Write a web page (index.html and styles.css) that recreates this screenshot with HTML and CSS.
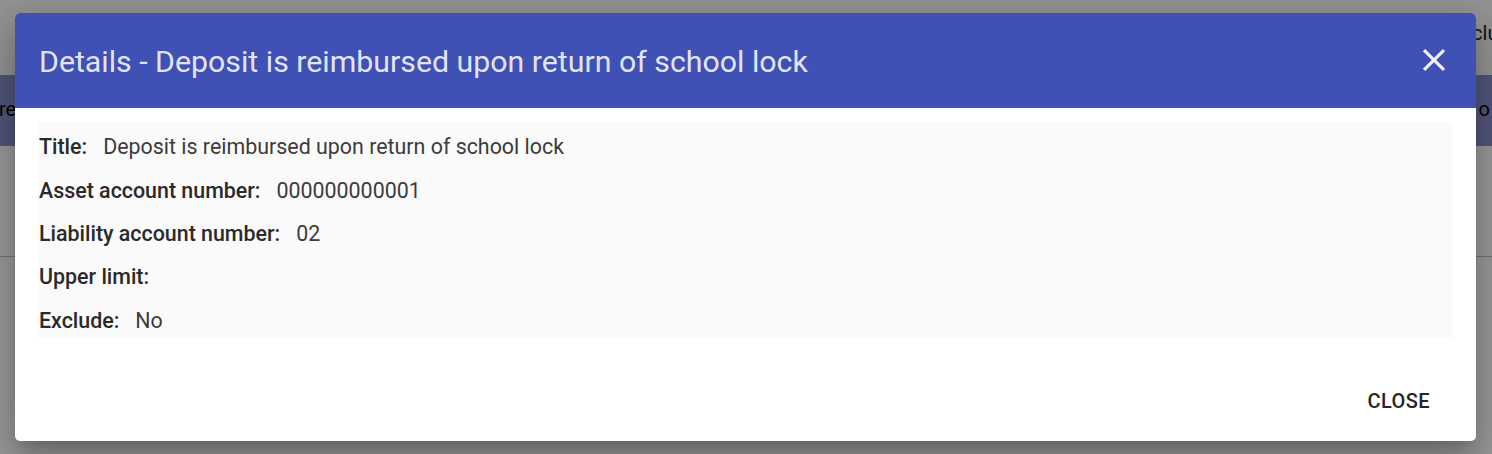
FILE: index.html
```html
<!DOCTYPE html>
<html lang="en">
<head>
<meta charset="utf-8">
<title>Details</title>
<link rel="stylesheet" href="styles.css">
</head>
<body>
<div class="page">
  <div class="topbar"><span class="top-text">Exclude</span></div>
  <div class="band"><span class="band-left">reimbursed</span><span class="band-right">o</span></div>
  <div class="rowline"></div>
</div>
<div class="backdrop"></div>
<div class="dialog">
  <div class="dialog-header">
    <h2 class="dialog-title">Details - Deposit is reimbursed upon return of school lock</h2>
    <button class="icon-btn" aria-label="Close">
      <svg viewBox="0 0 24 24" width="38" height="38"><path fill="currentColor" d="M19 6.41L17.59 5 12 10.59 6.41 5 5 6.41 10.59 12 5 17.59 6.41 19 12 13.41 17.59 19 19 17.59 13.41 12z"/></svg>
    </button>
  </div>
  <div class="dialog-content">
    <div class="panel">
      <div class="row"><span class="label">Title:</span><span class="value">Deposit is reimbursed upon return of school lock</span></div>
      <div class="row"><span class="label">Asset account number:</span><span class="value">000000000001</span></div>
      <div class="row"><span class="label">Liability account number:</span><span class="value">02</span></div>
      <div class="row"><span class="label">Upper limit:</span><span class="value"></span></div>
      <div class="row"><span class="label">Exclude:</span><span class="value">No</span></div>
    </div>
  </div>
  <div class="dialog-actions">
    <button class="text-btn">CLOSE</button>
  </div>
</div>
</body>
</html>
```
FILE: styles.css
```css
* { box-sizing: border-box; }
html, body { margin: 0; padding: 0; }
body {
  width: 1492px;
  height: 454px;
  overflow: hidden;
  font-family: Roboto, "Noto Sans", Arial, sans-serif;
  background: #ffffff;
  position: relative;
}
.page { display: flex; flex-direction: column; }
.topbar {
  height: 77px;
  background: #f5f5f5;
  display: flex;
  align-items: center;
  padding-left: 1451px;
  white-space: nowrap;
  overflow: hidden;
}
.top-text { font-size: 20px; color: #212121; margin-top: -12px; }
.band {
  height: 71px;
  background: #8890cf;
  display: flex;
  align-items: center;
  justify-content: space-between;
  white-space: nowrap;
  overflow: hidden;
  font-size: 20px;
  color: #000;
  margin-top: -2px;
}
.band-left { margin-left: -1px; margin-top: -4px; }
.band-right { margin-right: 2px; margin-top: -4px; }
.rowline {
  margin-top: 110px;
  height: 1px;
  background: #bdbdbd;
}
.backdrop {
  position: absolute;
  inset: 0;
  background: rgba(0, 0, 0, 0.4);
}
.dialog {
  position: absolute;
  left: 15px;
  top: 13px;
  width: 1461px;
  height: 428px;
  background: #fff;
  border-radius: 5px;
  overflow: hidden;
  box-shadow: 0 11px 15px -7px rgba(0,0,0,.2), 0 24px 38px 3px rgba(0,0,0,.14), 0 9px 46px 8px rgba(0,0,0,.12);
  display: flex;
  flex-direction: column;
}
.dialog-header {
  height: 95px;
  background: #3f51b5;
  display: flex;
  align-items: center;
  justify-content: space-between;
  padding: 0 23px 0 24px;
}
.dialog-title {
  margin: 0;
  font-size: 30.3px;
  font-weight: 400;
  color: rgba(255,255,255,0.87);
  letter-spacing: 0;
  margin-top: 2px;
}
.icon-btn {
  border: 0;
  background: transparent;
  color: #eef0fa;
  padding: 0;
  width: 38px;
  height: 38px;
  display: flex;
  align-items: center;
  justify-content: center;
  margin-top: -2px;
}
.dialog-content {
  padding: 14px 24px 0 23px;
}
.panel {
  background: #fafafa;
  padding: 3px 1px 0 1px;
  height: 216px;
}
.row {
  height: 43.4px;
  display: flex;
  align-items: center;
  font-size: 21.4px;
}
.label { font-weight: 500; color: #2a2a2a; margin-right: 16px; }
.value { color: #3c3c3c; font-weight: 400; }
.dialog-actions {
  display: flex;
  justify-content: flex-end;
  padding: 45px 24px 0 0;
}
.text-btn {
  border: 0;
  background: transparent;
  font-family: Roboto, "Noto Sans", Arial, sans-serif;
  font-size: 20px;
  font-weight: 500;
  letter-spacing: 0.02em;
  color: #262626;
  height: 36px;
  padding: 0 22px;
}
```
